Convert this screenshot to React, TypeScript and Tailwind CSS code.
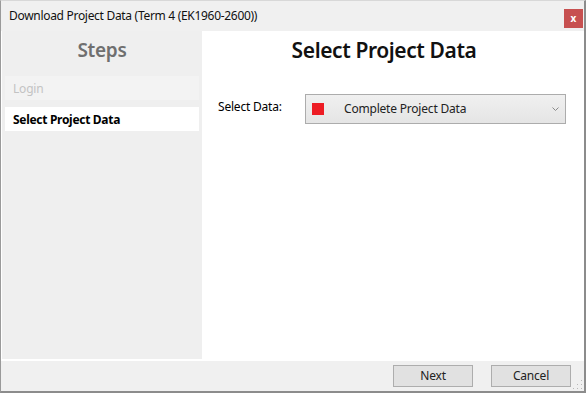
import React from 'react'

const font = { fontFamily: '"Noto Sans", "Open Sans", sans-serif' }

function Grip() {
  const dots = [
    [9, 1],
    [9, 5],
    [5, 5],
    [9, 9],
    [5, 9],
    [1, 9],
  ]
  return (
    <svg width="11" height="11" viewBox="0 0 11 11" className="absolute bottom-[1px] right-[1px]">
      {dots.map(([x, y], i) => (
        <rect key={i} x={x} y={y} width="1" height="1" fill="#b8b8b8" />
      ))}
    </svg>
  )
}

export default function App() {
  return (
    <div
      className="relative w-[586px] h-[393px] bg-[#f0f0f0] border-l border-r-2 border-b-2 border-t border-l-[#9a9a9a] border-r-[#8c8c8c] border-b-[#8c8c8c] border-t-[#d8d8d8] flex flex-col text-[12px] text-black overflow-hidden"
      style={font}
    >
      {/* title bar */}
      <div className="h-[30px] flex items-center justify-between pl-[8px] pr-[1px] shrink-0">
        <span className="text-[12px] tracking-[-0.3px] text-[#111]">Download Project Data (Term 4 (EK1960-2600))</span>
        <div className="w-[19px] h-[19px] shrink-0 mt-[4px] bg-[#c75050] flex items-center justify-center text-white text-[10px] font-bold leading-none">
          x
        </div>
      </div>

      {/* body */}
      <div className="flex-1 bg-white flex pl-[1px]">
        <div className="w-[200px] mb-[2px] bg-[#efefef] flex flex-col px-[3px]">
          <div className="text-center text-[19px] font-semibold text-[#6f6f6f] pt-[5px] h-[45px] tracking-[-0.3px]">Steps</div>
          <div className="h-[24px] bg-[#f3f3f3] flex items-center pl-[8px] pt-[1px] text-[#c3c3c3] tracking-[-0.2px]">Login</div>
          <div className="h-[24px] mt-[7px] bg-white flex items-center pl-[8px] pt-[1px] font-bold tracking-[-0.3px]">Select Project Data</div>
        </div>

        <div className="flex-1 flex flex-col pr-[18px]">
          <div className="text-center text-[21px] font-semibold pt-[4px] h-[63px] tracking-[-0.4px] text-[#111]">Select Project Data</div>
          <div className="flex items-start">
            <span className="ml-[16px] w-[87px] pt-[4px] tracking-[-0.2px]">Select Data:</span>
            <div className="flex-1 h-[30px] border border-[#acacac] bg-gradient-to-b from-[#f0f0f0] to-[#e5e5e5] flex items-center pl-[6px] pr-[6px]">
              <div className="w-[12px] h-[12px] bg-[#ed1c24]" />
              <span className="ml-[20px] flex-1 tracking-[-0.2px] text-[#222]">Complete Project Data</span>
              <svg width="7" height="5" viewBox="0 0 7 5">
                <path d="M0.5 0.5 L3.5 3.5 L6.5 0.5" fill="none" stroke="#8a8a8a" strokeWidth="1" />
              </svg>
            </div>
          </div>
        </div>
      </div>

      {/* footer */}
      <div className="relative h-[30px] shrink-0 flex items-center justify-end gap-[18px] pr-[13px]">
        <button className="w-[80px] h-[22px] bg-[#e1e1e1] border border-[#adadad] text-[12px] text-[#222] tracking-[-0.2px]">Next</button>
        <button className="w-[80px] h-[22px] bg-[#e1e1e1] border border-[#adadad] text-[12px] text-[#222] tracking-[-0.2px]">Cancel</button>
        <Grip />
      </div>
    </div>
  )
}
